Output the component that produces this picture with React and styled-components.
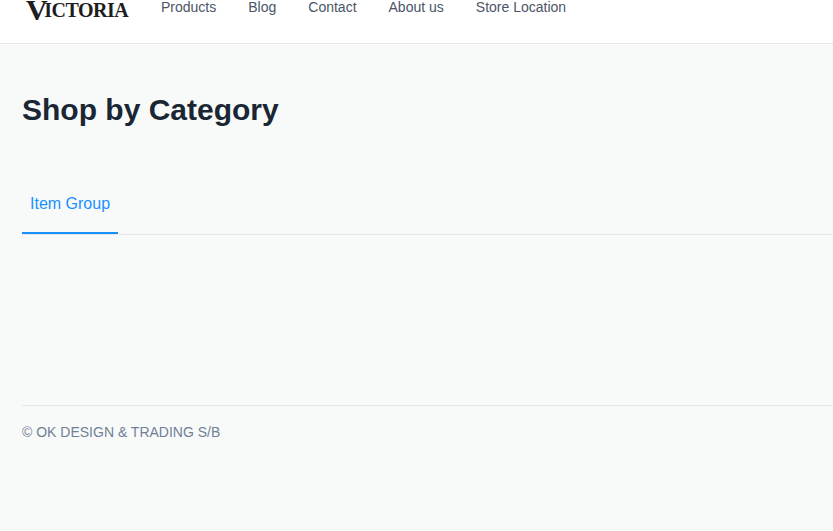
import React from 'react';
import styled, { createGlobalStyle } from 'styled-components';

const GlobalStyle = createGlobalStyle`
  html, body {
    margin: 0;
    padding: 0;
    height: 100%;
    overflow: hidden;
    background: #f8fafa;
    font-family: "Liberation Sans", Arial, sans-serif;
  }
`;

const Page = styled.div`
  width: 833px;
  height: 531px;
  overflow: hidden;
`;

const Header = styled.header`
  height: 43px;
  background: #fff;
  border-bottom: 1px solid #e5e7eb;
  display: flex;
  align-items: flex-start;
  padding-left: 26px;
  overflow: hidden;
`;

const Logo = styled.div`
  width: 135px;
  height: 20px;
  display: flex;
  align-items: flex-end;
  font-family: "Liberation Serif", "Times New Roman", serif;
  font-weight: bold;
  color: #1f1d1e;
  line-height: 1;
`;

const LogoCap = styled.span`
  font-size: 30px;
  line-height: 20px;
  letter-spacing: -3.5px;
`;

const LogoRest = styled.span`
  font-size: 20px;
  line-height: 20px;
  letter-spacing: -0.5px;
`;

const Nav = styled.nav`
  display: flex;
  gap: 32px;
`;

const NavLink = styled.a`
  font-size: 14px;
  line-height: 14px;
  color: #4a5568;
  text-decoration: none;
`;

const Main = styled.main`
  padding: 48px 0 0 22px;
`;

const Title = styled.h1`
  margin: 0;
  font-size: 30px;
  line-height: 36px;
  font-weight: bold;
  color: #1a2634;
`;

const TabBar = styled.div`
  display: flex;
  margin-top: 55px;
  border-bottom: 1px solid #e5e7eb;
`;

const Tab = styled.div`
  padding: 12px 8px 19px;
  font-size: 16px;
  line-height: 18px;
  color: ${(p) => (p.$active ? '#1890ff' : '#4a5568')};
  border-bottom: 2px solid ${(p) => (p.$active ? '#1890ff' : 'transparent')};
`;

const Footer = styled.footer`
  margin-top: 170px;
  padding-top: 18px;
  border-top: 1px solid #e5e7eb;
  font-size: 14px;
  line-height: 17px;
  color: #718096;
`;

const links = ['Products', 'Blog', 'Contact', 'About us', 'Store Location'];

export default function App() {
  return (
    <Page>
      <GlobalStyle />
      <Header>
        <Logo>
          <LogoCap>V</LogoCap>
          <LogoRest>ICTORIA</LogoRest>
        </Logo>
        <Nav>
          {links.map((l) => (
            <NavLink key={l}>{l}</NavLink>
          ))}
        </Nav>
      </Header>
      <Main>
        <Title>Shop by Category</Title>
        <TabBar>
          <Tab $active>Item Group</Tab>
        </TabBar>
        <Footer>© OK DESIGN &amp; TRADING S/B</Footer>
      </Main>
    </Page>
  );
}
